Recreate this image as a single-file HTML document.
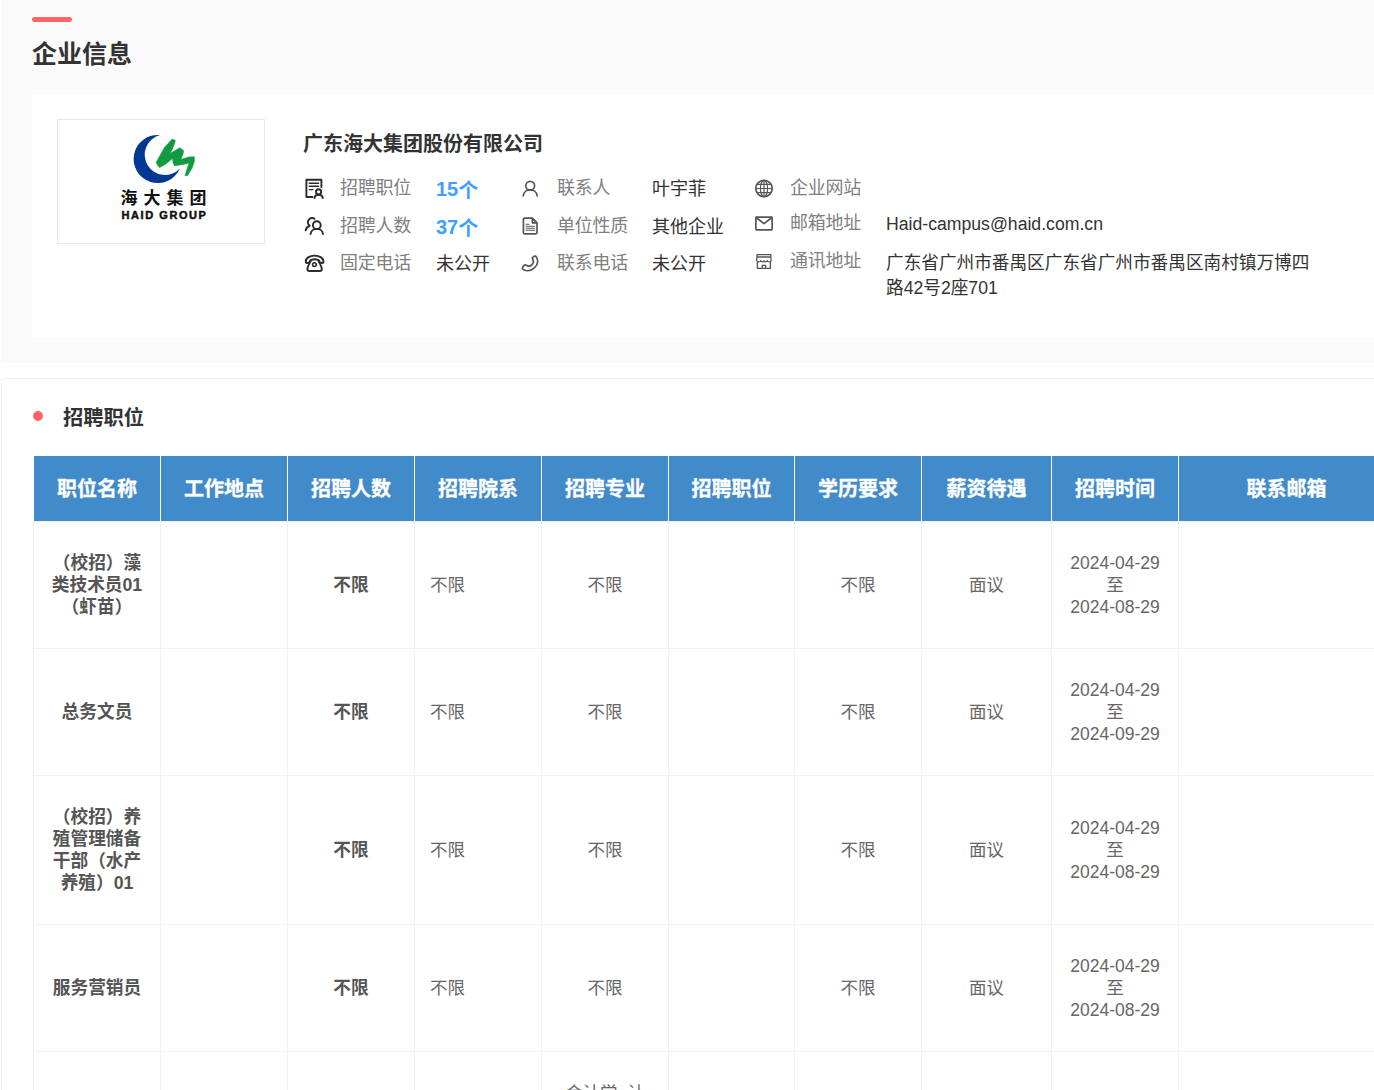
<!DOCTYPE html>
<html lang="zh-CN">
<head>
<meta charset="utf-8">
<title>企业信息</title>
<style>
*{box-sizing:border-box;margin:0;padding:0}
html,body{width:1374px;height:1090px;overflow:hidden;background:#fff}
body{position:relative;font-family:"Liberation Sans","Noto Sans CJK SC",sans-serif;color:#333}
.top{position:absolute;left:1px;top:0;width:1374px;height:363px;background:#fafafa}
.bar{position:absolute;left:32px;top:17px;width:40px;height:5px;border-radius:3px;background:#ff6469}
.h1{position:absolute;left:32px;top:36px;font-size:25px;line-height:36px;font-weight:bold;color:#333;white-space:nowrap}
.card{position:absolute;left:32px;top:94px;width:1360px;height:244px;background:#fff}
.logo{position:absolute;left:57px;top:119px;width:208px;height:125px;border:1px solid #e8e8e8;background:#fff}
.cname{position:absolute;left:303px;top:129px;font-size:20px;line-height:30px;font-weight:bold;color:#333;white-space:nowrap}
.lb,.vl{position:absolute;line-height:26px;white-space:nowrap}
.lb{color:#808080;font-size:18px;letter-spacing:-0.25px}
.vl{color:#333;font-size:17.65px}
.vl.b{color:#409eff;font-weight:bold;font-size:20px}
.d{position:relative;top:-2px}
.ic{position:absolute}
.panel{position:absolute;left:1px;top:378px;width:1400px;height:760px;border:1px solid #f0f0f0;border-radius:5px;background:#fff}
.dot{position:absolute;left:33px;top:411px;width:10px;height:10px;border-radius:50%;background:#ff6469}
.h2{position:absolute;left:63px;top:403px;font-size:20.3px;line-height:30px;font-weight:bold;color:#333;white-space:nowrap}
table{position:absolute;left:33px;top:456px;border-collapse:collapse;table-layout:fixed;width:1480px}
th{-webkit-text-stroke:0.3px #fff;height:65px;background:#428bca;color:#fff;font-size:20px;font-weight:bold;border-left:1px solid #fff;border-right:1px solid #fff;text-align:center;vertical-align:middle;padding:0 0 2px}
td{border:1px solid #f2f2f2;font-size:17.5px;line-height:22px;color:#666;text-align:center;vertical-align:middle;padding:1px 18px 0}
td.n{font-weight:bold;color:#555;font-size:17.7px;padding-left:15px;padding-right:15px}
td.l{text-align:left;padding-left:15px}
</style>
</head>
<body>
<div class="top"></div>
<div class="bar"></div>
<div class="h1">企业信息</div>
<div class="card"></div>
<div class="logo"></div>
<div class="cname">广东海大集团股份有限公司</div>

<div class="lb" style="left:340px;top:175px">招聘职位</div>
<div class="vl b" style="left:436px;top:178px"><span class="d">15</span>个</div>
<div class="lb" style="left:340px;top:213px">招聘人数</div>
<div class="vl b" style="left:436px;top:216px"><span class="d">37</span>个</div>
<div class="lb" style="left:340px;top:250px">固定电话</div>
<div class="vl" style="left:436px;top:251px;font-size:18px">未公开</div>

<div class="lb" style="left:557px;top:175px">联系人</div>
<div class="vl" style="left:652px;top:176px;font-size:18px">叶宇菲</div>
<div class="lb" style="left:557px;top:213px">单位性质</div>
<div class="vl" style="left:652px;top:214px;font-size:18px">其他企业</div>
<div class="lb" style="left:557px;top:250px">联系电话</div>
<div class="vl" style="left:652px;top:251px;font-size:18px">未公开</div>

<div class="lb" style="left:790px;top:175px">企业网站</div>
<div class="lb" style="left:790px;top:210px">邮箱地址</div>
<div class="vl" style="left:886px;top:211px">Haid-campus@haid.com.cn</div>
<div class="lb" style="left:790px;top:248px">通讯地址</div>
<div class="vl" style="left:886px;top:251px;white-space:normal;width:430px;line-height:25px">广东省广州市番禺区广东省广州市番禺区南村镇万博四路42号2座701</div>

<svg class="ic" style="left:0;top:100px" width="1374" height="200" viewBox="0 100 1374 200">
<!-- logo -->
<g>
<path d="M159.9 135.05 A24.05 24.05 0 1 0 179.7 168.7 A20.3 20.3 0 1 1 159.9 135.05 Z" fill="#003893"/>
<path d="M156.1 162.4 L164.6 147.2 L172.2 139.1 L175.4 140.5 L173.9 145.5 L170.1 153.6 L179.7 147.8 L183.5 150.4 L183.2 153.6 L180.9 159.4 L189.0 157.1 L194.3 156.8 L194.3 161.8 L192.0 168.2 L187.6 175.5 L185.0 175.7 L189.0 162.9 L183.2 164.4 L174.5 165.8 L173.0 162.4 L172.7 158.3 L165.8 164.1 L159.6 167.6 L157.6 165.3 Z" fill="#109b40" stroke="#109b40" stroke-width="0.6" stroke-linejoin="round"/>
<text x="166.6" y="204" text-anchor="middle" font-family="'Liberation Sans','Noto Sans CJK SC',sans-serif" font-weight="bold" font-size="17" letter-spacing="6" fill="#111">海大集团</text>
<text x="164.5" y="219" text-anchor="middle" font-family="'Liberation Sans',sans-serif" font-weight="bold" font-size="11" letter-spacing="1.55" fill="#111" stroke="#111" stroke-width="0.5">HAID GROUP</text>
</g>
<!-- col1 icons -->
<g fill="none" stroke="#2b2b2b" stroke-width="1.9" stroke-linecap="round" stroke-linejoin="round">
<path d="M312.5 197 H306.4 V179.8 H321.4 V187"/>
<path d="M309.3 183.2 H318.6 M309.3 186.3 H318.6 M309.3 189.6 H312.8" stroke-width="1.4"/>
<circle cx="318.6" cy="191.8" r="2.6"/>
<path d="M314.6 198 C315 193.6 322.2 193.6 322.8 198"/>
<circle cx="316.8" cy="225.2" r="3.9"/>
<path d="M310.6 234 C311.2 227.2 322.4 227.2 323 234"/>
<path d="M309.6 225.6 A3.9 3.9 0 1 1 314.6 218.8"/>
<path d="M305.6 230.4 C306.2 228 307.6 226.6 309.4 226"/>
<path d="M305.8 262.4 C304.6 253.4 324.6 253.4 323.4 262.4 C322.6 263.6 319.6 262.8 319.4 261.4 C319.6 258.6 309.6 258.6 309.8 261.4 C309.6 262.8 306.6 263.6 305.8 262.4 Z"/>
<path d="M310.8 260.6 C309.8 263.6 307.4 266 307.4 269 C307.4 270.4 308.2 271 309.4 271 H319.8 C321 271 321.8 270.4 321.8 269 C321.8 266 319.4 263.6 318.4 260.6"/>
<circle cx="314.4" cy="264.6" r="1.9" stroke-width="1.5"/>
</g>
<!-- col2 icons -->
<g fill="none" stroke="#555" stroke-width="1.7" stroke-linecap="round" stroke-linejoin="round">
<circle cx="530.2" cy="185.8" r="4.4"/>
<path d="M523.2 195.8 C524 187.8 536.4 187.8 537.2 195.8"/>
<path d="M532.4 218.2 H524.6 C523.8 218.2 523.4 218.6 523.4 219.4 V232.6 C523.4 233.4 523.8 233.8 524.6 233.8 H535.8 C536.6 233.8 537 233.4 537 232.6 V222.8 L532.4 218.2 V222.8 H537"/>
<path d="M526 224.2 H529 M526 226.2 H534.4 M526 228.2 H534.4 M526 230.2 H534.4" stroke-width="1.1"/>
<path d="M533.6 256.6 C534.6 255.8 535.6 256 536.2 256.8 C538.6 260.4 538 264.4 534.6 267.6 C531.2 270.8 527 271.6 523.2 269.4 C522.4 268.8 522.2 267.8 522.8 267 L524.2 265.4 C524.8 264.8 525.6 264.8 526.2 265.2 C528.4 266.6 530.6 266.2 532 264.6 C533.6 263 533.8 261 532.6 259 C532.2 258.4 532.2 257.6 532.8 257.2 Z"/>
</g>
<!-- col3 icons -->
<g fill="none" stroke="#555" stroke-width="1.7" stroke-linecap="round" stroke-linejoin="round">
<circle cx="764" cy="188.5" r="8.2"/>
<ellipse cx="764" cy="188.5" rx="3.6" ry="8.2" stroke-width="1.2"/>
<path d="M764 180.3 V196.7 M755.8 188.5 H772.2 M757 184.4 H771 M757 192.6 H771" stroke-width="1.2"/>
<rect x="755.9" y="217.2" width="16.2" height="12.6" rx="0.6"/>
<path d="M756.4 217.8 L764 223.6 L771.6 217.8"/>
<path d="M757 254.6 H770.8 V257 H757 Z M757 257 L756.6 260.6 C757.4 262.4 760 262.4 760.6 260.6 C761.4 262.4 763.6 262.4 764 260.6 C764.4 262.4 766.6 262.4 767.4 260.6 C768 262.4 770.6 262.4 771.2 260.6 L770.8 257 M757.4 262 V268.4 H770.4 V262 M762.2 268.4 V265.4 H765.6 V268.4" stroke-width="1.3"/>
</g>
</svg>
<div class="panel"></div>
<div class="dot"></div>
<div class="h2">招聘职位</div>

<table>
<colgroup><col style="width:127px"><col style="width:127px"><col style="width:127px"><col style="width:127px"><col style="width:127px"><col style="width:126px"><col style="width:127px"><col style="width:130px"><col style="width:127px"><col style="width:216px"><col style="width:119px"></colgroup>
<thead><tr><th>职位名称</th><th>工作地点</th><th>招聘人数</th><th>招聘院系</th><th>招聘专业</th><th>招聘职位</th><th>学历要求</th><th>薪资待遇</th><th>招聘时间</th><th>联系邮箱</th><th></th></tr></thead>
<tbody>
<tr style="height:127px"><td class="n">（校招）藻类技术员01（虾苗）</td><td></td><td class="n">不限</td><td class="l">不限</td><td>不限</td><td></td><td>不限</td><td>面议</td><td>2024-04-29<br>至<br>2024-08-29</td><td></td><td></td></tr>
<tr style="height:127px"><td class="n">总务文员</td><td></td><td class="n">不限</td><td class="l">不限</td><td>不限</td><td></td><td>不限</td><td>面议</td><td>2024-04-29<br>至<br>2024-09-29</td><td></td><td></td></tr>
<tr style="height:149px"><td class="n">（校招）养殖管理储备干部（水产养殖）01</td><td></td><td class="n">不限</td><td class="l">不限</td><td>不限</td><td></td><td>不限</td><td>面议</td><td>2024-04-29<br>至<br>2024-08-29</td><td></td><td></td></tr>
<tr style="height:127px"><td class="n">服务营销员</td><td></td><td class="n">不限</td><td class="l">不限</td><td>不限</td><td></td><td>不限</td><td>面议</td><td>2024-04-29<br>至<br>2024-08-29</td><td></td><td></td></tr>
<tr style="height:260px"><td class="n">储备干部</td><td></td><td class="n">不限</td><td class="l">不限</td><td><span style="position:relative;top:-1px">会计学, 计算机科学与技术, 财务管理, 工商管理, 市场营销, 人力资源管理, 动物科学, 水产养殖学</span></td><td></td><td>不限</td><td>面议</td><td>2024-04-29<br>至<br>2024-08-29</td><td></td><td></td></tr>
</tbody>
</table>
</body>
</html>
